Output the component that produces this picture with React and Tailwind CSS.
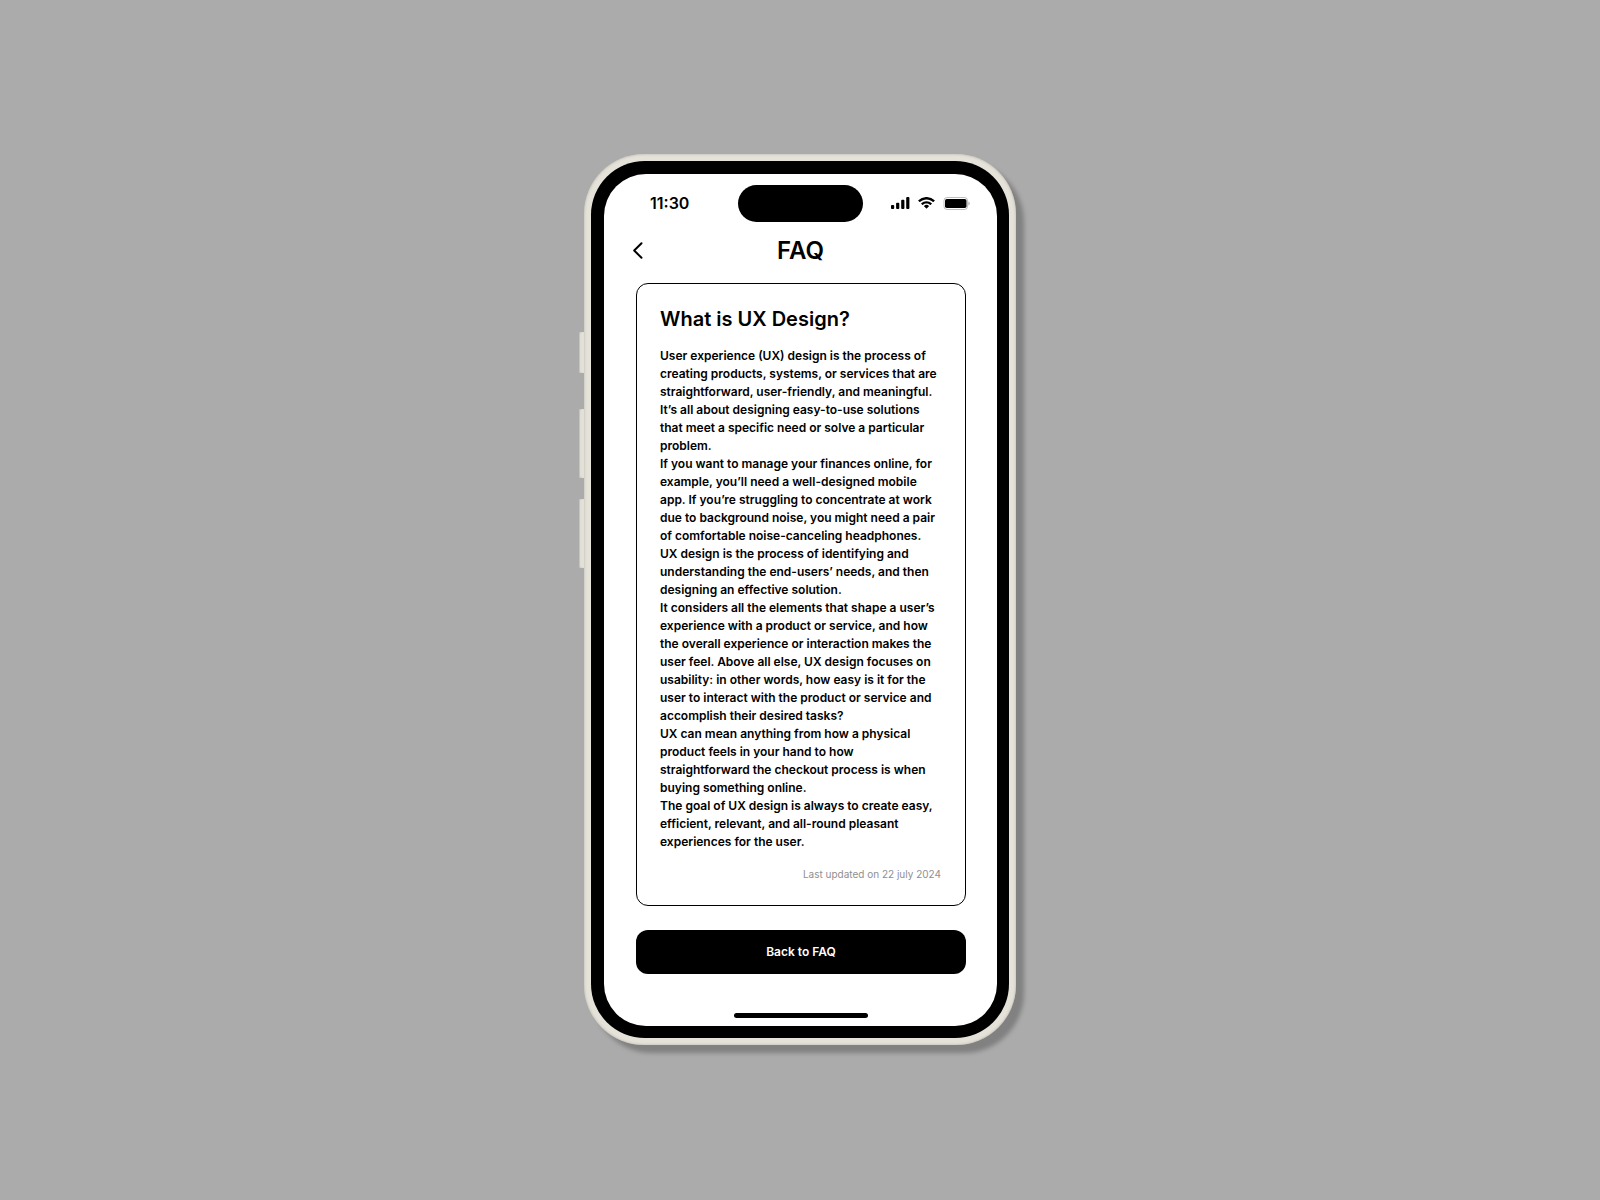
import React from "react";

const paragraphs = [
  "User experience (UX) design is the process of creating products, systems, or services that are straightforward, user-friendly, and meaningful. It’s all about designing easy-to-use solutions that meet a specific need or solve a particular problem.",
  "If you want to manage your finances online, for example, you’ll need a well-designed mobile app. If you’re struggling to concentrate at work due to background noise, you might need a pair of comfortable noise-canceling headphones.",
  "UX design is the process of identifying and understanding the end-users’ needs, and then designing an effective solution.",
  "It considers all the elements that shape a user’s experience with a product or service, and how the overall experience or interaction makes the user feel. Above all else, UX design focuses on usability: in other words, how easy is it for the user to interact with the product or service and accomplish their desired tasks?",
  "UX can mean anything from how a physical product feels in your hand to how straightforward the checkout process is when buying something online.",
  "The goal of UX design is always to create easy, efficient, relevant, and all-round pleasant experiences for the user.",
];

function SignalIcon() {
  return (
    <svg width="19" height="12" viewBox="0 0 19 12" fill="currentColor" aria-hidden="true">
      <rect x="0" y="8" width="3.2" height="4" rx="0.9" />
      <rect x="5.1" y="5.8" width="3.2" height="6.2" rx="0.9" />
      <rect x="10.2" y="2.8" width="3.2" height="9.2" rx="0.9" />
      <rect x="15.2" y="0" width="3.2" height="12" rx="0.9" />
    </svg>
  );
}

function WifiIcon() {
  return (
    <svg width="17" height="12" viewBox="0 0 17 12" fill="currentColor" aria-hidden="true">
      <path d="M8.5 2.4c2.4 0 4.7.9 6.5 2.6.1.1.3.1.4 0l1.3-1.3c.1-.1.1-.3 0-.4a11.8 11.8 0 0 0-16.4 0c-.1.1-.1.3 0 .4L1.6 5c.1.1.3.1.4 0 1.8-1.7 4.1-2.6 6.5-2.6Z" />
      <path d="M8.5 6.6c1.3 0 2.6.5 3.6 1.4.1.1.3.1.4 0l1.3-1.3c.1-.1.1-.3 0-.4a7.7 7.7 0 0 0-10.6 0c-.1.1-.1.3 0 .4l1.3 1.3c.1.1.3.1.4 0 1-.9 2.3-1.4 3.6-1.4Z" />
      <path d="M11 9.3c.1-.1.1-.3 0-.4a3.9 3.9 0 0 0-5 0c-.1.1-.1.3 0 .4l2.3 2.3c.1.1.3.1.4 0L11 9.3Z" />
    </svg>
  );
}

function BatteryIcon() {
  return (
    <svg width="27" height="13" viewBox="0 0 27 13" aria-hidden="true">
      <rect x="1" y="0.5" width="23.5" height="12" rx="3" fill="none" stroke="#000" strokeOpacity="0.25" />
      <path d="M25.5 4.5v4c.7-.3 1.1-1.1 1.1-2s-.4-1.7-1.1-2Z" fill="#000" fillOpacity="0.4" />
      <rect x="2" y="2" width="21.5" height="9" rx="1.8" fill="#000" />
    </svg>
  );
}

function StatusBar() {
  return (
    <div className="grid grid-cols-[1fr_125px_1fr] items-center">
      <span className="pl-[46px] text-base leading-6 font-semibold">11:30</span>
      <div className="h-[37px] rounded-full bg-black"></div>
      <div className="flex items-center justify-center gap-2">
        <SignalIcon />
        <WifiIcon />
        <BatteryIcon />
      </div>
    </div>
  );
}

function Header() {
  return (
    <header className="mt-[13px] mb-4 grid grid-cols-[32px_1fr_32px] items-center px-5">
      <button type="button" aria-label="Go back" className="flex h-8 w-7 items-center justify-center">
        <svg width="10" height="17" viewBox="0 0 10 17" fill="none" stroke="#000" strokeWidth="2" strokeLinecap="round" strokeLinejoin="round" aria-hidden="true">
          <path d="M8.5 1.2 1.2 8.5 8.5 15.8" />
        </svg>
      </button>
      <h1 className="text-center text-2xl leading-8 font-semibold">FAQ</h1>
    </header>
  );
}

function Article() {
  return (
    <article className="rounded-xl border border-black py-[23px] pr-6 pl-[23px]">
      <h2 className="text-xl leading-6 font-semibold">What is UX Design?</h2>
      <div className="mt-4 text-xs leading-[18px] font-semibold">
        {paragraphs.map((text) => (
          <p key={text}>{text}</p>
        ))}
      </div>
      <p className="mt-4 text-right text-[10px] leading-[15px] text-[#8f8f8f]">Last updated on 22 july 2024</p>
    </article>
  );
}

export default function App() {
  return (
    <div className="flex min-h-screen items-center justify-center bg-[#ababab] pb-0.5 font-['Inter',sans-serif] text-black">
      <div className="relative">
        {/* Side buttons */}
        <div className="absolute top-[178px] -left-[5px] h-[41px] w-2 rounded-[2px] bg-[#e3e0d8] shadow-[inset_1px_0_1px_#c4c1b9]"></div>
        <div className="absolute top-[255px] -left-[5px] h-[69px] w-2 rounded-[2px] bg-[#e3e0d8] shadow-[inset_1px_0_1px_#c4c1b9]"></div>
        <div className="absolute top-[345px] -left-[5px] h-[69px] w-2 rounded-[2px] bg-[#e3e0d8] shadow-[inset_1px_0_1px_#c4c1b9]"></div>

        {/* Frame and bezel */}
        <div className="relative rounded-[60px] bg-[#e5e2d9] p-[7px] shadow-[8px_8px_4px_#828182,inset_0_0_3px_#b5b2aa]">
          <div className="rounded-[54px] bg-black pt-[13px] pr-3 pb-3 pl-[13px]">
            <main className="w-full max-w-[393px] rounded-[42px] bg-white pt-[11px] pb-2">
              <StatusBar />
              <Header />
              <div className="pr-[31px] pl-8">
                <Article />
                <button type="button" className="mt-6 h-11 w-full rounded-xl bg-black text-xs font-semibold text-white">
                  Back to FAQ
                </button>
              </div>
              <div className="mx-auto mt-[39px] h-[5px] w-[134px] rounded-full bg-black"></div>
            </main>
          </div>
        </div>
      </div>
    </div>
  );
}
